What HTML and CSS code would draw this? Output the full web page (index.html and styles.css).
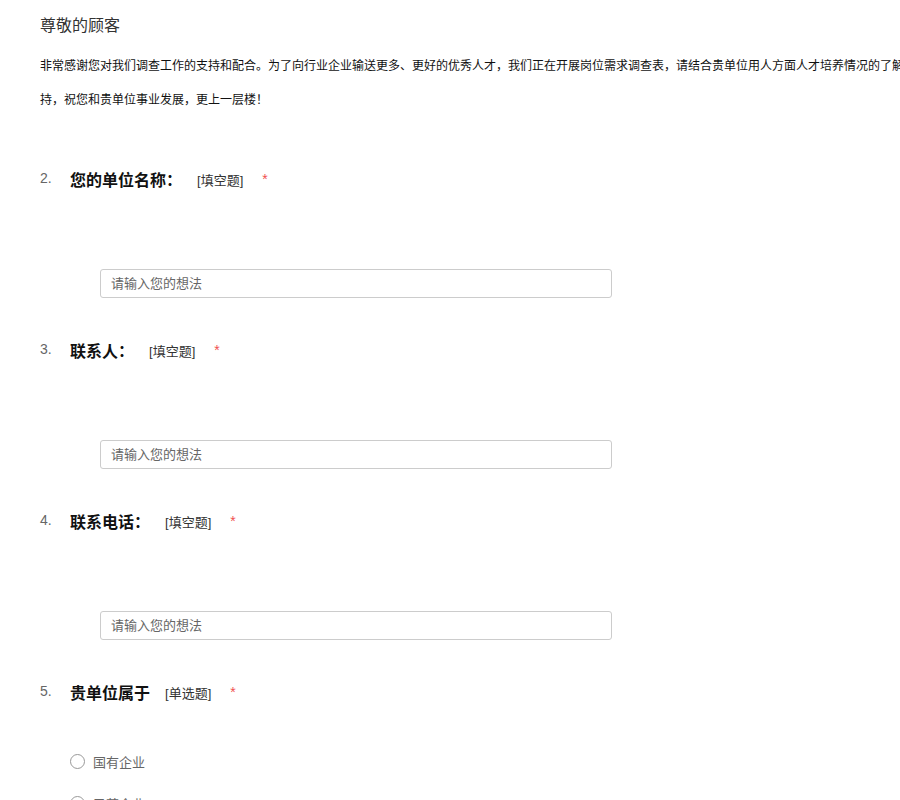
FILE: index.html
```html
<!DOCTYPE html>
<html lang="zh-CN">
<head>
<meta charset="utf-8">
<title>岗位需求调查表</title>
<link rel="stylesheet" href="styles.css">
</head>
<body>
<div class="page">
  <div class="greeting">尊敬的顾客</div>
  <p class="intro">非常感谢您对我们调查工作的支持和配合。为了向行业企业输送更多、更好的优秀人才，我们正在开展岗位需求调查表，请结合贵单位用人方面人才培养情况的了解如实填写。衷心感谢您的大力支持，祝您和贵单位事业发展，更上一层楼！</p>

  <div class="question">
    <div class="q-head">
      <span class="q-num">2.</span>
      <span class="q-title">您的单位名称：</span>
      <span class="q-type">[填空题]</span>
      <span class="q-star">*</span>
    </div>
    <div class="q-body">
      <input class="q-input" type="text" placeholder="请输入您的想法">
    </div>
  </div>

  <div class="question">
    <div class="q-head">
      <span class="q-num">3.</span>
      <span class="q-title">联系人：</span>
      <span class="q-type">[填空题]</span>
      <span class="q-star">*</span>
    </div>
    <div class="q-body">
      <input class="q-input" type="text" placeholder="请输入您的想法">
    </div>
  </div>

  <div class="question">
    <div class="q-head">
      <span class="q-num">4.</span>
      <span class="q-title">联系电话：</span>
      <span class="q-type">[填空题]</span>
      <span class="q-star">*</span>
    </div>
    <div class="q-body">
      <input class="q-input" type="text" placeholder="请输入您的想法">
    </div>
  </div>

  <div class="question">
    <div class="q-head">
      <span class="q-num">5.</span>
      <span class="q-title">贵单位属于</span>
      <span class="q-type">[单选题]</span>
      <span class="q-star">*</span>
    </div>
    <div class="q-options">
      <label class="option"><span class="radio"></span><span class="opt-text">国有企业</span></label>
      <label class="option"><span class="radio"></span><span class="opt-text">民营企业</span></label>
      <label class="option"><span class="radio"></span><span class="opt-text">外资企业</span></label>
    </div>
  </div>
</div>
</body>
</html>
```

FILE: styles.css
```css
html, body {
  margin: 0;
  padding: 0;
  background: #fff;
  overflow-x: hidden;
}
body {
  font-family: "Liberation Sans", "Noto Sans CJK SC", sans-serif;
  color: #333;
}
.page {
  padding: 15px 0 0 40px;
  width: 1040px;
}
.greeting {
  font-size: 16px;
  line-height: 21px;
  color: #333;
}
.intro {
  margin: 13px 0 0;
  font-size: 12px;
  line-height: 34px;
  color: #111;
  width: 1032px;
}
.question {
  margin-top: 50px;
}
.question + .question {
  margin-top: 40px;
}
.q-head {
  display: flex;
  align-items: center;
  height: 24px;
}
.q-num {
  width: 30px;
  font-size: 14px;
  color: #666;
  position: relative;
  top: -1px;
}
.q-title {
  font-size: 16px;
  font-weight: bold;
  color: #111;
  margin-right: 15px;
}
.q-type {
  font-size: 13px;
  color: #333;
  margin-right: 19px;
}
.q-star {
  font-size: 14px;
  color: #f05050;
}
.q-body {
  margin-top: 78px;
  padding-left: 60px;
}
.q-input {
  display: block;
  box-sizing: border-box;
  width: 512px;
  height: 29px;
  border: 1px solid #ccc;
  border-radius: 3px;
  padding: 0 10px;
  font-family: "Liberation Sans", "Noto Sans CJK SC", sans-serif;
  font-size: 13px;
  color: #333;
  outline: none;
}
.q-input::placeholder {
  color: #666;
}
.q-options {
  margin-top: 46px;
  padding-left: 30px;
  display: flex;
  flex-direction: column;
  gap: 20px;
}
.option {
  display: flex;
  align-items: center;
  height: 22px;
}
.radio {
  box-sizing: border-box;
  width: 15px;
  height: 15px;
  border: 1px solid #999;
  border-radius: 50%;
  margin-right: 8px;
}
.opt-text {
  font-size: 13px;
  color: #666;
}
```
